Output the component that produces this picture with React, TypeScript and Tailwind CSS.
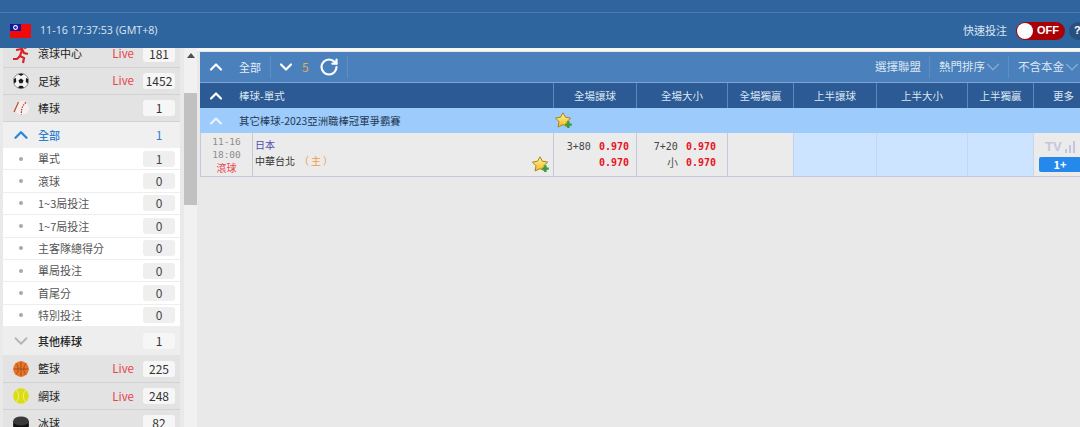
import React from 'react';
import { ChevronDown, ChevronUp, RotateCw } from 'lucide-react';

const CJK = "font-['Noto_Sans_CJK_TC','Noto_Sans',sans-serif]";
const MONO = "font-['DejaVu_Sans_Mono','Liberation_Mono',monospace]";

function Flag() {
  return (
    <svg width="21" height="14" viewBox="0 0 21 14" className="shrink-0">
      <rect width="21" height="14" fill="#f00a0a" />
      <rect width="11" height="7" fill="#15159a" />
      <circle cx="5.5" cy="3.5" r="2.4" fill="#fff" />
      <circle cx="5.5" cy="3.5" r="1.3" fill="#15159a" />
    </svg>
  );
}

function Runner() {
  return (
    <svg width="20" height="20" viewBox="0 0 20 20">
      <circle cx="14" cy="3" r="2" fill="#d8232a" />
      <path d="M5 6 L11 5 L13 9 L17 10 M11 6 L9 12 L13 14 L12 19 M9 12 L6 15 L2 15" fill="none" stroke="#d8232a" strokeWidth="2.2" />
    </svg>
  );
}

function Soccer() {
  return (
    <svg width="16" height="16" viewBox="0 0 16 16">
      <circle cx="8" cy="8" r="7.6" fill="#f4f4f4" stroke="#555" strokeWidth="0.6" />
      <path d="M8 5.5 L10.5 7.3 L9.5 10.2 L6.5 10.2 L5.5 7.3 Z" fill="#1c1c1c" />
      <path d="M5.2 1.2 L8 0.6 L10.8 1.2 L8 3 Z M0.8 6 L3 5 L3.2 9 L1.2 10.6 Z M15.2 6 L13 5 L12.8 9 L14.8 10.6 Z M4.8 14.6 L6.8 12.8 L9.2 12.8 L11.2 14.6 L8 15.6 Z" fill="#1c1c1c" />
    </svg>
  );
}

function Baseball() {
  return (
    <svg width="16" height="16" viewBox="0 0 16 16">
      <circle cx="9" cy="8" r="7" fill="#f3f0ee" />
      <path d="M13 2.5 C9.5 5 8 9 8.5 14.6" fill="none" stroke="#c8281e" strokeWidth="1.1" strokeDasharray="1.6 1" />
      <path d="M5.5 2 L1 12" stroke="#b9482e" strokeWidth="1.2" />
    </svg>
  );
}

function Basketball() {
  return (
    <svg width="16" height="16" viewBox="0 0 16 16">
      <circle cx="8" cy="8" r="7.8" fill="#e8742a" />
      <path d="M0.5 8 H15.5 M8 0.3 V15.7 M2.8 2.2 C6 5 6 11 2.8 13.8 M13.2 2.2 C10 5 10 11 13.2 13.8" fill="none" stroke="#8c4312" strokeWidth="0.7" />
    </svg>
  );
}

function Tennis() {
  return (
    <svg width="16" height="16" viewBox="0 0 16 16">
      <circle cx="8" cy="8" r="7.8" fill="#dcdc14" />
      <path d="M3 1.8 C6.5 5 6.5 11 3 14.2 M13 1.8 C9.5 5 9.5 11 13 14.2" fill="none" stroke="#f2f2a0" strokeWidth="0.8" />
    </svg>
  );
}

function Puck() {
  return (
    <svg width="16" height="16" viewBox="0 0 16 16">
      <ellipse cx="8" cy="11" rx="7.8" ry="4.5" fill="#111" />
      <rect x="0.2" y="6" width="15.6" height="5" fill="#111" />
      <ellipse cx="8" cy="6" rx="7.8" ry="4.5" fill="#3a3a3a" />
    </svg>
  );
}

function StarPlus({ className = '' }: { className?: string }) {
  return (
    <svg width="18" height="17" viewBox="0 0 18 17" className={className}>
      <defs>
        <linearGradient id="star" x1="0" y1="0" x2="0" y2="1">
          <stop offset="0" stopColor="#fff09a" />
          <stop offset="1" stopColor="#f2bf22" />
        </linearGradient>
      </defs>
      <path d="M8 0.8 L10.4 5.2 L15.6 6 L12 9.7 L12.9 15 L8 12.6 L3.1 15 L4 9.7 L0.4 6 L5.6 5.2 Z" fill="url(#star)" stroke="#a8841f" strokeWidth="1" strokeLinejoin="round" />
      <path d="M13.4 9.2 V16 M10 12.6 H16.8" stroke="#3c9a3c" strokeWidth="2.4" />
    </svg>
  );
}

function Pill({ value, tone = 'bg-[#f6f6f6]', text = 'text-[#333]' }: { value: number; tone?: string; text?: string }) {
  return (
    <span className={`flex h-[16px] w-[32px] items-center justify-center rounded-[3px] text-[12px] ${tone} ${text}`}>
      {value}
    </span>
  );
}

function SportRow({ icon, name, live, count, first }: { icon: React.ReactNode; name: string; live?: boolean; count: number; first?: boolean }) {
  return (
    <div className={`flex h-[27px] shrink-0 items-center bg-[#e3e3e3] ${first ? '' : 'border-t border-[#d2d2d2]'}`}>
      <div className="flex w-[35px] shrink-0 justify-center">{icon}</div>
      <span className="text-[11px] text-[#222]">{name}</span>
      <span className="ml-auto mr-[9px] text-[11.5px] text-[#e8434b]">{live ? 'Live' : ''}</span>
      <div className="mr-[5px]">
        <Pill value={count} />
      </div>
    </div>
  );
}

const subItems: [string, number][] = [
  ['單式', 1],
  ['滾球', 0],
  ['1~3局投注', 0],
  ['1~7局投注', 0],
  ['主客隊總得分', 0],
  ['單局投注', 0],
  ['首尾分', 0],
  ['特別投注', 0],
];

function Sidebar() {
  return (
    <div className={`-mt-[8px] ml-[3px] flex w-[177px] shrink-0 flex-col ${CJK}`}>
      <SportRow first icon={<Runner />} name="滾球中心" live count={181} />
      <SportRow icon={<Soccer />} name="足球" live count={1452} />
      <SportRow icon={<Baseball />} name="棒球" count={1} />
      <div className="flex h-[27px] shrink-0 items-center border-t border-[#d2d2d2] bg-[#f0f0f0]">
        <div className="flex w-[35px] shrink-0 justify-center">
          <ChevronUp size={22} strokeWidth={2.6} className="text-[#2f86d6]" />
        </div>
        <span className="text-[11px] font-medium text-[#2f7fd0]">全部</span>
        <div className="ml-auto mr-[5px]">
          <Pill value={1} tone="bg-[#f0f0f0]" text="text-[#2f7fd0]" />
        </div>
      </div>
      {subItems.map(([label, n]) => (
        <div key={label} className="flex h-[22.4px] shrink-0 items-center border-b border-[#eeeeee] bg-white">
          <div className="flex w-[35px] shrink-0 justify-center">
            <span className="size-[4px] rounded-full bg-[#a9a9a9]" />
          </div>
          <span className="text-[11px] text-[#555]">{label}</span>
          <div className="ml-auto mr-[5px]">
            <Pill value={n} tone="bg-[#efefef]" text="text-[#444]" />
          </div>
        </div>
      ))}
      <div className="flex h-[28px] shrink-0 items-center bg-[#eeeeee]">
        <div className="flex w-[35px] shrink-0 justify-center">
          <ChevronDown size={22} strokeWidth={2} className="text-[#b5b5b5]" />
        </div>
        <span className="text-[11px] font-medium text-[#222]">其他棒球</span>
        <div className="ml-auto mr-[5px]">
          <Pill value={1} tone="bg-[#f6f6f6]" />
        </div>
      </div>
      <SportRow first icon={<Basketball />} name="籃球" live count={225} />
      <SportRow icon={<Tennis />} name="網球" live count={248} />
      <SportRow icon={<Puck />} name="冰球" count={82} />
    </div>
  );
}

function Scrollbar() {
  return (
    <div className="ml-[4px] flex w-[13px] shrink-0 flex-col bg-[#f1f1f1]">
      <div className="flex h-[45px] justify-center pt-[5px]">
        <span className="size-0 border-x-[4px] border-b-[5px] border-x-transparent border-b-[#505050]" />
      </div>
      <div className="h-[112px] bg-[#c1c1c1]" />
    </div>
  );
}

const columns = 'grid grid-cols-[52px_301px_83px_91px_66px_83px_91px_66px_60px]';
const headers = ['全場讓球', '全場大小', '全場獨贏', '上半讓球', '上半大小', '上半獨贏', '更多'];

function Odds({ a, b, pad }: { a?: string; b: string; pad: string }) {
  return (
    <div className={`flex h-[16px] items-center justify-end ${pad}`}>
      {a && <span className={`mr-[8px] text-[10px] text-[#444] ${MONO}`}>{a}</span>}
      <span className={`text-[10px] font-bold text-[#e6141e] ${MONO}`}>{b}</span>
    </div>
  );
}

function Board() {
  return (
    <div className={`ml-[3px] mt-[1px] w-[892px] shrink-0 ${CJK}`}>
      <div className="flex h-[30px] items-center bg-[#4a80bc] pl-[6px] text-[11px] text-[#e4edf7]">
        <ChevronUp size={20} strokeWidth={2.6} className="text-white" />
        <span className="ml-[13px]">全部</span>
        <span className="ml-[9px] h-[22px] w-px bg-[#5e90c6]" />
        <ChevronDown size={20} strokeWidth={2.6} className="ml-[5px] text-white" />
        <span className="ml-[6px] text-[12px] text-[#e3b04a]">5</span>
        <RotateCw size={20} strokeWidth={2.6} className="ml-[10px] text-white" />
        <span className="ml-[8px] h-[22px] w-px bg-[#5e90c6]" />
        <span className="ml-auto text-[11.5px] text-[#dbe6f2]">選擇聯盟</span>
        <span className="ml-[8px] h-[22px] w-px bg-[#5e90c6]" />
        <span className="ml-[9px] text-[11.5px] text-[#dbe6f2]">熱門排序</span>
        <ChevronDown size={22} strokeWidth={1.5} className="-ml-[3px] text-[#85aad6]" />
        <span className="ml-[4px] h-[22px] w-px bg-[#5e90c6]" />
        <span className="ml-[9px] text-[11.5px] text-[#dbe6f2]">不含本金</span>
        <ChevronDown size={22} strokeWidth={1.5} className="-ml-[3px] mr-[9px] text-[#85aad6]" />
      </div>
      <div className={`${columns} h-[26px] border-t border-[#7fa4cf] bg-[#2b5a94] text-[10.5px] text-[#dce7f3]`}>
        <div className="col-span-2 flex items-center pl-[6px]">
          <ChevronUp size={20} strokeWidth={2.6} className="text-white" />
          <span className="ml-[13px]">棒球-單式</span>
        </div>
        {headers.map((h) => (
          <div key={h} className="flex items-center justify-center border-l border-[#5f88ba]">
            {h}
          </div>
        ))}
      </div>
      <div className={`${columns} h-[25px] items-center bg-[#9ccbfc]`}>
        <div className="col-span-2 flex items-center pl-[6px] text-[10.4px] text-[#23384f]">
          <ChevronUp size={20} strokeWidth={2.6} className="text-[#e8f3ff]" />
          <span className="ml-[13px]">其它棒球-2023亞洲職棒冠軍爭霸賽</span>
        </div>
        <div className="pl-[2px]">
          <StarPlus />
        </div>
      </div>
      <div className={`${columns} h-[44px] border-b border-[#c5c8dc] bg-[#ebebeb]`}>
        <div className={`flex flex-col items-center border-l border-[#c5c8dc] pt-[2px] text-[9.5px] leading-[13px] text-[#8e8e8e] ${MONO}`}>
          <span>11-16</span>
          <span>18:00</span>
          <span className={`text-[10px] text-[#e8434b] ${CJK}`}>滾球</span>
        </div>
        <div className="relative border-l border-[#c5c8dc] pl-[2px] pt-[4px] text-[10px] leading-[16px]">
          <div className="text-[#4d4bb0]">日本</div>
          <div className="text-[#333]">
            中華台北<span className="ml-[4px] tracking-[2px] text-[#f09a4a]">（主）</span>
          </div>
          <StarPlus className="absolute bottom-[3px] right-[3px]" />
        </div>
        <div className="border-l border-[#c5c8dc] pt-[5px]">
          <Odds a="3+80" b="0.970" pad="pr-[7px]" />
          <Odds b="0.970" pad="pr-[7px]" />
        </div>
        <div className="border-l border-[#c5c8dc] pt-[5px]">
          <Odds a="7+20" b="0.970" pad="pr-[11px]" />
          <div className="flex h-[16px] items-center justify-end pr-[11px]">
            <span className="mr-[8px] text-[11px] text-[#555]">小</span>
            <span className={`text-[10px] font-bold text-[#e6141e] ${MONO}`}>0.970</span>
          </div>
        </div>
        <div className="border-l border-[#c5c8dc]" />
        <div className="border-l border-[#bcd4ee] bg-[#cce4ff]" />
        <div className="border-l border-[#c5d6ee] bg-[#cce4ff]" />
        <div className="border-l border-[#c5d6ee] bg-[#cce4ff]" />
        <div className="flex flex-col border-l border-[#c5d6ee] pl-[5px] pt-[5px]">
          <div className="flex h-[17px] items-center gap-[3px] pl-[6px]">
            <span className="font-['Liberation_Sans',sans-serif] text-[13px] font-bold text-[#c5c6de]">TV</span>
            <span className="flex items-end gap-[2px]">
              <span className="h-[4px] w-[2px] bg-[#c5c6de]" />
              <span className="h-[8px] w-[2px] bg-[#c5c6de]" />
              <span className="h-[12px] w-[2px] bg-[#c5c6de]" />
            </span>
          </div>
          <div className="mt-[2px] flex h-[15px] w-[42px] items-center justify-center rounded-[2px] bg-[#2589ec] text-[11px] font-bold text-white">
            1+
          </div>
        </div>
      </div>
    </div>
  );
}

function Header() {
  return (
    <div className="relative z-10 h-[48px] shrink-0 bg-[#2f659f]">
      <div className="h-[13px] border-b border-[#4a7db5]" />
      <div className="flex h-[35px] items-center pl-[10px]">
        <Flag />
        <span className="ml-[9px] font-['Open_Sans',sans-serif] text-[10.7px] text-[#dce6f2]">11-16 17:37:53 (GMT+8)</span>
        <span className={`ml-auto text-[11px] text-[#dce6f2] ${CJK}`}>快速投注</span>
        <div className="ml-[9px] flex h-[18px] w-[49px] items-center rounded-full bg-[#a90006] pl-[1px]">
          <span className="size-[16px] rounded-full bg-white" />
          <span className="ml-[4px] font-['Liberation_Sans',sans-serif] text-[11px] font-bold text-white">OFF</span>
        </div>
        <div className="ml-[4px] flex h-[18px] w-[11px] items-center rounded-l-full bg-[#27507e] pl-[5px] font-['Liberation_Sans',sans-serif] text-[11px] font-bold text-white">
          ?
        </div>
      </div>
    </div>
  );
}

export default function App() {
  return (
    <div className="flex h-[427px] w-[1080px] flex-col overflow-hidden bg-[#e9e9e9]">
      <Header />
      <div className="flex min-h-0 flex-1">
        <Sidebar />
        <Scrollbar />
        <div className="min-w-0 flex-1">
          <div className="h-[3px] bg-[#f7f7f7]" />
          <Board />
        </div>
      </div>
    </div>
  );
}
